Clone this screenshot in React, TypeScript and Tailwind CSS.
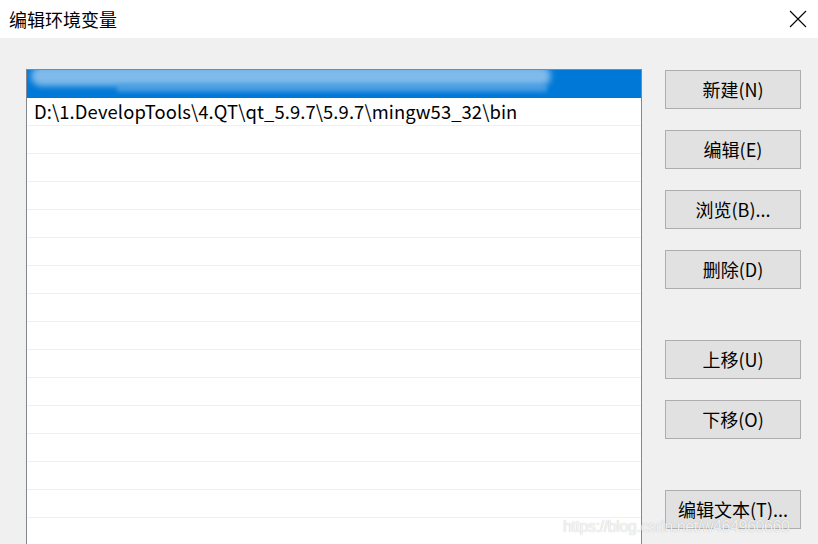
import React from 'react';

const paths = ['', 'D:\\1.DevelopTools\\4.QT\\qt_5.9.7\\5.9.7\\mingw53_32\\bin'];

const buttons: { label: string; gap?: boolean }[] = [
  { label: '新建(N)' },
  { label: '编辑(E)' },
  { label: '浏览(B)...' },
  { label: '删除(D)' },
  { label: '上移(U)', gap: true },
  { label: '下移(O)' },
  { label: '编辑文本(T)...', gap: true },
];

const font = { fontFamily: '"Noto Sans CJK SC", "Noto Sans", sans-serif' };

const App: React.FC = () => {
  const rows = Array.from({ length: 18 }, (_, i) => paths[i] ?? null);

  return (
    <div className="relative w-[818px] h-[544px] overflow-hidden bg-[#f0f0f0] flex flex-col" style={font}>
      <div className="h-[38px] bg-white flex items-center justify-between pl-[9px] pr-[10px] shrink-0">
        <span className="text-[18px] text-black leading-none">编辑环境变量</span>
        <svg width="18" height="18" viewBox="0 0 18 18" className="mr-[1px]">
          <path d="M1 1 L17 17 M17 1 L1 17" stroke="#000" strokeWidth="1.1" />
        </svg>
      </div>

      <div className="flex pl-[26px] pt-[31px]">
        <div className="w-[616px] h-[500px] bg-white border border-[#828790] overflow-hidden">
          {rows.map((p, i) =>
            i === 0 ? (
              <div key={i} className="h-[28px] bg-[#0078d7] relative overflow-hidden">
                <div className="absolute left-[4px] top-[-4px] w-[520px] h-[20px] bg-[#9fcbf0] rounded-full blur-[3px] opacity-80" />
                <div className="absolute left-[90px] top-[14px] w-[430px] h-[8px] bg-[#5aa6e6] blur-[2px] opacity-70" />
              </div>
            ) : (
              <div
                key={i}
                className="h-[28px] border-b border-[#f0f0f0] flex items-center pl-[7px] text-[18.4px] tracking-[0.1px] text-black whitespace-nowrap"
              >
                {p}
              </div>
            )
          )}
        </div>

        <div className="flex flex-col ml-[23px] pt-[1px]">
          {buttons.map((b) => (
            <button
              key={b.label}
              className={`w-[136px] h-[39px] bg-[#e1e1e1] border border-[#adadad] text-[18px] text-black flex items-center justify-center ${
                b.gap ? 'mt-[51px]' : 'mt-[21px] first:mt-0'
              }`}
            >
              {b.label}
            </button>
          ))}
        </div>
      </div>

      <div
        className="absolute left-[563px] top-[515px] text-[16px] text-white/85 tracking-tight"
        style={{ fontFamily: '"Liberation Sans", sans-serif', textShadow: '0 0 1px rgba(0,0,0,0.3)' }}
      >
        https://blog.csdn.net/w464960660
      </div>
    </div>
  );
};

export default App;
